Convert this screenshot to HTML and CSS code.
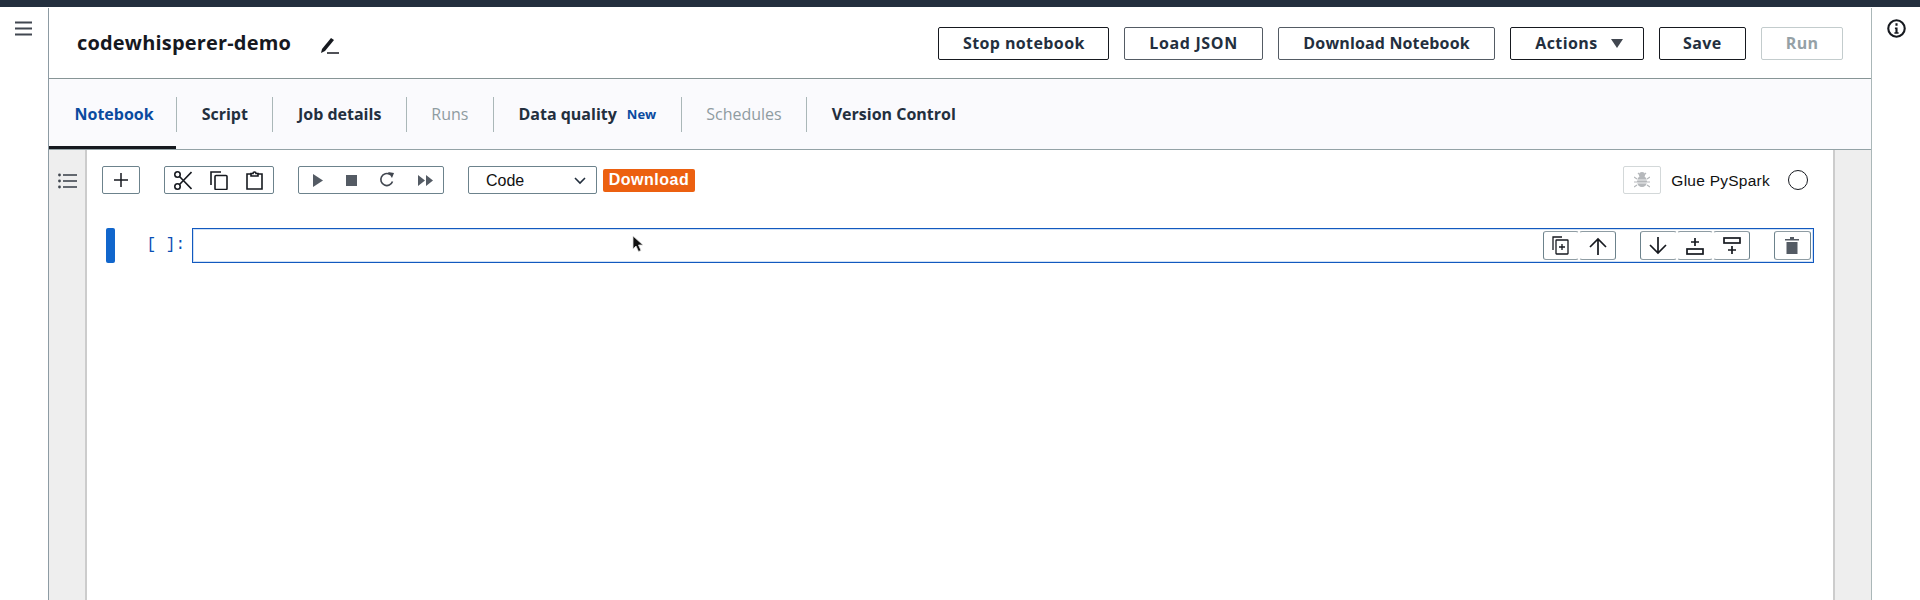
FILE: index.html
```html
<!DOCTYPE html>
<html lang="en">
<head>
<meta charset="utf-8">
<title>codewhisperer-demo</title>
<link rel="stylesheet" href="styles.css">
</head>
<body>
<div class="topbar"></div>
<div class="shell">
  <aside class="rail rail-left">
    <svg class="ico-menu" width="17" height="15" viewBox="0 0 17 15"><path d="M0 1.500h17M0 7.500h17M0 13.500h17" stroke="#414750" stroke-width="2.200" fill="none"/></svg>
  </aside>
  <main class="main">
    <header class="header">
      <h1 class="title">codewhisperer-demo</h1>
      <svg class="ico-pencil" width="18" height="17" viewBox="0 0 18 17"><path d="M1 12 L10 1 L13 3 L4 14 L0 16 Z" fill="#16191f"/><path d="M6 16h12" stroke="#16191f" stroke-width="1.500"/></svg>
      <div class="actions">
        <button class="btn btn-dark">Stop notebook</button>
        <button class="btn btn-wide">Load JSON</button>
        <button class="btn btn-tight">Download Notebook</button>
        <button class="btn btn-dark btn-actions">Actions <svg width="12" height="9" viewBox="0 0 12 9"><path d="M0 0h12L6 9z" fill="#414750"/></svg></button>
        <button class="btn btn-dark">Save</button>
        <button class="btn btn-off">Run</button>
      </div>
    </header>
    <nav class="tabs">
      <a class="tab tab-active">Notebook</a><span class="sep"></span>
      <a class="tab">Script</a><span class="sep"></span>
      <a class="tab">Job details</a><span class="sep"></span>
      <a class="tab tab-off">Runs</a><span class="sep"></span>
      <a class="tab">Data quality <em class="new">New</em></a><span class="sep"></span>
      <a class="tab tab-off">Schedules</a><span class="sep"></span>
      <a class="tab">Version Control</a>
    </nav>
    <section class="workspace">
      <div class="gutter">
        <svg class="ico-toc" width="19" height="16" viewBox="0 0 19 16"><g fill="#414750"><circle cx="1.500" cy="2" r="1.400"/><circle cx="1.500" cy="8" r="1.400"/><circle cx="1.500" cy="14" r="1.400"/><rect x="5" y="1.200" width="14" height="1.600"/><rect x="5" y="7.200" width="14" height="1.600"/><rect x="5" y="13.200" width="14" height="1.600"/></g></svg>
      </div>
      <div class="notebook">
        <div class="toolbar">
          <div class="group group-add">
            <svg width="16" height="16" viewBox="0 0 16 16"><path d="M8 1v14M1 8h14" stroke="#16191f" stroke-width="1.500"/></svg>
          </div>
          <div class="group group-edit">
            <svg width="18" height="19" viewBox="0 0 18 19"><g fill="none" stroke="#16191f" stroke-width="1.600"><circle cx="3.500" cy="3.500" r="2.700"/><circle cx="3.500" cy="15.500" r="2.700"/><path d="M5.500 5.500 L17.500 18M5.500 13.500 L17.500 1"/></g></svg>
            <svg width="18" height="19" viewBox="0 0 18 19"><g fill="none" stroke="#16191f" stroke-width="1.600"><path d="M11 1H1v13"/><rect x="5" y="4.500" width="12" height="14" rx="1"/></g></svg>
            <svg width="17" height="19" viewBox="0 0 17 19"><g fill="none" stroke="#16191f" stroke-width="1.600"><path d="M5 3H1v15h15V3h-4"/><path d="M5 5V2.500h2a1.500 1.500 0 0 1 3 0h2V5z"/></g></svg>
          </div>
          <div class="group group-run">
            <svg width="10" height="13" viewBox="0 0 10 13"><path d="M0 0l10 6.500L0 13z" fill="#545b64"/></svg>
            <svg width="11" height="11" viewBox="0 0 11 11"><rect width="11" height="11" fill="#545b64"/></svg>
            <svg width="16" height="16" viewBox="0 0 16 16"><path d="M13.500 9.500A6 6 0 1 1 11 2.500" fill="none" stroke="#414750" stroke-width="1.600"/><path d="M9 0l6 1-2 5z" fill="#414750"/></svg>
            <svg width="15" height="11" viewBox="0 0 15 11"><path d="M0 0l7 5.500L0 11zM8 0l7 5.500L8 11z" fill="#545b64"/></svg>
          </div>
          <div class="select">
            <span>Code</span>
            <svg width="12" height="8" viewBox="0 0 12 8"><path d="M1 1l5 5 5-5" fill="none" stroke="#232f3e" stroke-width="1.600"/></svg>
          </div>
          <span class="badge">Download</span>
          <div class="kernel">
            <div class="group group-debug">
              <svg width="16" height="16" viewBox="0 0 16 16"><g fill="#b5b8bb"><ellipse cx="8" cy="9.500" rx="5" ry="5.500"/><circle cx="8" cy="3" r="3"/></g><path d="M0 5l3 2M16 5l-3 2M0 10h3M16 10h-3M0 15l3-2M16 15l-3-2M4 1l2 2M12 1l-2 2" stroke="#b5b8bb" stroke-width="1.200"/><path d="M3 8h10M3 11h10" stroke="#fff" stroke-width=".8"/></svg>
            </div>
            <span class="kernel-name">Glue PySpark</span>
            <span class="kernel-dot"></span>
          </div>
        </div>
        <div class="cell">
          <div class="indicator"></div>
          <div class="prompt">[ ]:</div>
          <div class="input">
            <div class="cell-tools">
              <div class="tool-group">
                <button class="tool"><svg width="17" height="19" viewBox="0 0 17 19"><g fill="none" stroke="#16191f" stroke-width="1.300"><path d="M10 1H1v13"/><rect x="4" y="4" width="12" height="14" rx=".5"/><path d="M7 11h6M10 8v6"/></g></svg></button>
                <button class="tool"><svg width="18" height="18" viewBox="0 0 18 18"><path d="M9 18V2M1 10l8-8 8 8" fill="none" stroke="#16191f" stroke-width="1.700"/></svg></button>
              </div>
              <div class="tool-group">
                <button class="tool"><svg width="18" height="18" viewBox="0 0 18 18"><path d="M9 0v16M1 8l8 8 8-8" fill="none" stroke="#16191f" stroke-width="1.700"/></svg></button>
                <button class="tool"><svg width="18" height="18" viewBox="0 0 18 18"><g fill="none" stroke="#16191f" stroke-width="1.700"><path d="M9 1v8M5 5h8"/><rect x="1" y="12" width="16" height="5"/></g></svg></button>
                <button class="tool"><svg width="18" height="18" viewBox="0 0 18 18"><g fill="none" stroke="#16191f" stroke-width="1.700"><rect x="1" y="1" width="16" height="5"/><path d="M9 9v8M5 13h8"/></g></svg></button>
              </div>
              <div class="tool-group">
                <button class="tool"><svg width="14" height="17" viewBox="0 0 14 17"><path d="M0 2h14v1.500H0zM5 0h4v2H5zM1.500 5h11v12h-11z" fill="#545b64"/></svg></button>
              </div>
            </div>
          </div>
        </div>
      </div>
      <div class="scroll-gutter"></div>
    </section>
  </main>
  <aside class="rail rail-right">
    <svg class="ico-info" width="19" height="19" viewBox="0 0 18 18"><circle cx="9" cy="9" r="7.800" fill="none" stroke="#16191f" stroke-width="2"/><path d="M7.500 8h2.500v4.500h1V14H7v-1.500h1V9.500h-.5zM8 4h2v2.300H8z" fill="#16191f"/></svg>
  </aside>
</div>
<svg class="cursor" width="13" height="18" viewBox="0 0 13 18"><path d="M1 1v13l3-3 2.500 5.500 2.500-1L6.500 10H11z" fill="#111" stroke="#ddd" stroke-width=".8"/></svg>
</body>
</html>
```
FILE: styles.css
```css
* { box-sizing: border-box; }
html, body { margin: 0; height: 600px; overflow: hidden; background: #fff; }
body { font-family: "Open Sans", "Liberation Sans", sans-serif; color: #16191f; position: relative; }
.topbar { height: 8px; background: #232f3e; border-bottom: 1px solid #fff; }
.shell { display: flex; height: 592px; }
.rail { flex: none; }
.rail-left { width: 48px; padding: 13px 0 0 15px; }
.rail-right { width: 48px; padding: 11px 0 0 15px; }
.main { flex: 1; min-width: 0; display: flex; flex-direction: column; border-left: 1px solid #8d9ba3; border-right: 1px solid #aab7b8; }
.ico-menu, .ico-info { display: block; }

.header { height: 71px; flex: none; display: flex; align-items: center; padding: 0 28px; border-bottom: 1px solid #879596; }
.title { margin: 0; font-size: 20px; font-weight: 700; line-height: 1; color: #16191f; letter-spacing: .18px; }
.ico-pencil { margin: 4px 0 0 30px; }
.actions { margin-left: auto; display: flex; gap: 15px; }
.btn { height: 33px; padding: 0 23.500px; background: #fff; border: 1px solid #545b64; border-radius: 2px; font: 700 16px "Open Sans", sans-serif; letter-spacing: .4px; color: #232f3e; display: flex; align-items: center; white-space: nowrap; }
.btn-dark { border-color: #16191f; }
.btn-wide { letter-spacing: .65px; padding: 0 24px; }
.btn-tight { letter-spacing: .15px; padding: 0 24.500px; }
.btn-actions { gap: 13px; padding: 0 20px 0 24px; }
.btn-off { color: #95a1a6; border-color: #c3cccd; }

.tabs { height: 71px; flex: none; display: flex; align-items: center; background: #fafafd; border-bottom: 1px solid #93a2a6; }
.tab { height: 70px; display: flex; align-items: center; padding: 3px 24.500px 0; font-size: 16px; font-weight: 700; color: #232f3e; white-space: nowrap; border-bottom: 3px solid transparent; }
.tab-active { color: #0a4a9f; border-bottom-color: #16191f; padding: 3px 22.500px 0 25.500px; }
.tab-off { color: #8f9ca1; font-weight: 400; }
.new { margin-left: 10px; font-size: 13px; font-style: normal; color: #0a4a9f; }
.sep { width: 1px; height: 35px; background: #aab7b8; flex: none; }

.workspace { flex: 1; min-height: 0; display: flex; }
.gutter { width: 38px; flex: none; background: #eeeeee; border-right: 2px solid #cccccc; padding: 23px 0 0 9px; }
.ico-toc { display: block; }
.scroll-gutter { width: 38px; flex: none; background: #eeeeee; border-left: 2px solid #cccccc; }
.notebook { flex: 1; min-width: 0; padding: 0 19px 0 15px; }

.toolbar { display: flex; align-items: center; height: 28px; margin-top: 16px; }
.group { height: 28px; display: flex; align-items: center; justify-content: space-between; background: #fff; border: 1px solid #6c828c; border-radius: 2px; flex: none; }
.group-add { width: 38px; margin-right: 24px; justify-content: center; }
.group-edit { width: 110px; margin-right: 24px; padding: 0 10px 0 9px; }
.group-run { width: 146px; margin-right: 24px; padding: 0 10px 0 14px; }
.select { width: 129px; height: 28px; padding: 1px 10px 0 17px; display: flex; align-items: center; justify-content: space-between; border: 1px solid #6c828c; border-radius: 2px; font: 16px "Liberation Sans", sans-serif; color: #111; flex: none; }
.badge { margin-left: 6px; width: 92px; height: 23px; display: flex; align-items: center; justify-content: center; background: #ec6010; border-radius: 2px; color: #fff; font: 700 16px "Liberation Sans", sans-serif; letter-spacing: .5px; }
.kernel { margin-left: auto; margin-right: 6px; display: flex; align-items: center; }
.group-debug { width: 38px; justify-content: center; border-color: #d3d8d9; }
.kernel-name { margin-left: 10px; padding-top: 1px; font: 15.500px "Liberation Sans", sans-serif; color: #111; letter-spacing: .25px; }
.kernel-dot { margin-left: 18px; width: 20px; height: 20px; border: 1.500px solid #16191f; border-radius: 50%; }

.cell { display: flex; align-items: stretch; height: 35px; margin-top: 34px; padding-left: 4px; }
.indicator { width: 9px; background: #1166cc; border-radius: 2px; flex: none; }
.prompt { width: 77px; flex: none; padding-right: 7px; text-align: right; font: 400 16px/35px "Liberation Mono", monospace; color: #0a4fb5; }
.input { flex: 1; min-width: 0; border: 1.500px solid #1259bf; box-shadow: inset 0 0 0 1px #cfe0f5; display: flex; justify-content: flex-end; align-items: center; padding-right: 2.500px; }
.cell-tools { display: flex; gap: 24px; }
.tool-group { display: flex; }
.tool { width: 36.670px; height: 29px; padding: 0; background: #fff; border: 1px solid #8e9ca3; border-left-color: transparent; border-right-color: transparent; border-radius: 3px; display: flex; align-items: center; justify-content: center; }
.tool-group .tool:first-child { border-left-color: #6c828c; }
.tool-group .tool:last-child { border-right-color: #6c828c; }
.cursor { position: absolute; left: 632px; top: 235px; }
```
